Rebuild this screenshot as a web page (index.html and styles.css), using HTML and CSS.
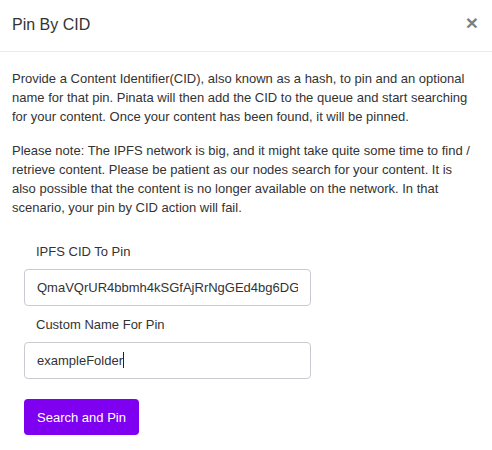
FILE: index.html
```html
<!DOCTYPE html>
<html>
<head>
<meta charset="utf-8">
<link rel="stylesheet" href="styles.css">
</head>
<body>
<div class="modal">
  <div class="modal-header">
    <h5 class="modal-title">Pin By CID</h5>
    <button class="close" type="button" aria-label="Close">×</button>
  </div>
  <div class="modal-body">
    <p class="desc">Provide a Content Identifier(CID), also known as a hash, to pin and an optional name for that pin. Pinata will then add the CID to the queue and start searching for your content. Once your content has been found, it will be pinned.</p>
    <p class="desc">Please note: The IPFS network is big, and it might take quite some time to find / retrieve content. Please be patient as our nodes search for your content. It is also possible that the content is no longer available on the network. In that scenario, your pin by CID action will fail.</p>
    <form class="pin-form">
      <label class="field-label" for="cid">IPFS CID To Pin</label>
      <input class="field-input" id="cid" type="text" value="QmaVQrUR4bbmh4kSGfAjRrNgGEd4bg6DG">
      <label class="field-label" for="name">Custom Name For Pin</label>
      <div class="input-wrap">
        <input class="field-input" id="name" type="text" value="exampleFolder">
        <span class="caret"></span>
      </div>
      <button class="btn-primary" type="button">Search and Pin</button>
    </form>
  </div>
</div>
</body>
</html>
```
FILE: styles.css
```css
* { box-sizing: border-box; }
html, body {
  margin: 0;
  padding: 0;
  background: #fff;
}
body {
  font-family: "Liberation Sans", Arial, sans-serif;
  color: #333;
  font-size: 13px;
}
.modal {
  width: 492px;
}
.modal-header {
  display: flex;
  align-items: center;
  justify-content: space-between;
  height: 52px;
  padding: 0 12px;
  border-bottom: 1px solid #e9ecef;
}
.modal-title {
  margin: 0;
  font-size: 16px;
  font-weight: 400;
  line-height: 24px;
  color: #333;
  position: relative;
  top: -1px;
}
.close {
  border: 0;
  background: none;
  padding: 0;
  margin-right: 2px;
  font-family: "Liberation Sans", Arial, sans-serif;
  font-size: 21px;
  font-weight: 700;
  line-height: 1;
  color: #000;
  opacity: 0.5;
  position: relative;
  top: -3px;
}
.modal-body {
  padding: 17px 22px 0 12px;
}
.desc {
  margin: 0 0 15px 0;
  line-height: 19px;
}
.pin-form {
  display: flex;
  flex-direction: column;
  align-items: flex-start;
  padding: 10px 12px 0 12px;
}
.field-label {
  display: block;
  padding-left: 12px;
  line-height: 19px;
  margin-bottom: 8px;
}
.input-wrap {
  position: relative;
  width: 287px;
}
.field-input {
  width: 287px;
  height: 37px;
  padding: 0 12px;
  border: 1px solid #c8ccd1;
  border-radius: 4px;
  font-family: "Liberation Sans", Arial, sans-serif;
  font-size: 13px;
  color: #333;
  background: #fff;
  margin-bottom: 9px;
  outline: none;
}
.caret {
  position: absolute;
  left: 99px;
  top: 10px;
  width: 1px;
  height: 16px;
  background: #222;
}
.btn-primary {
  margin-top: 11px;
  width: 115px;
  height: 36px;
  border: 0;
  border-radius: 4px;
  background: #7f00f0;
  color: #fff;
  font-family: "Liberation Sans", Arial, sans-serif;
  font-size: 13px;
  padding: 0;
}
```
